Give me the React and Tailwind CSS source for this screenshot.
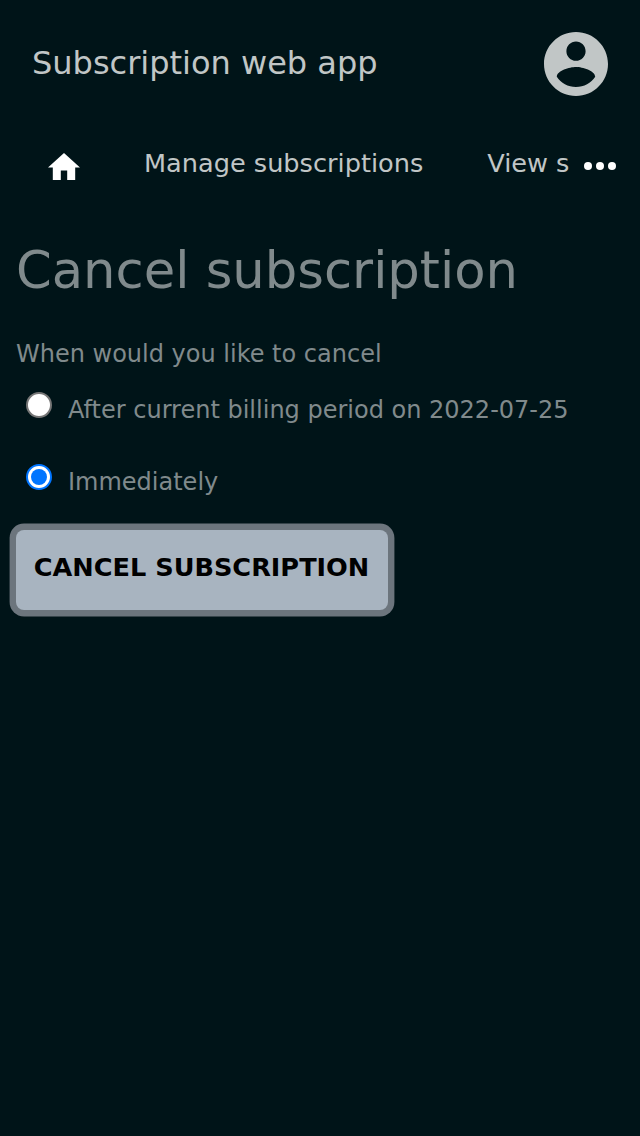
import React from "react";

function Header() {
  return (
    <header className="flex h-32 items-center justify-between px-8">
      <span className="pb-0.5 text-[32px] leading-none text-[#c1c6c6]">Subscription web app</span>
      <svg viewBox="2 2 20 20" className="size-16" fill="#c1c6c6" aria-label="Account">
        <path d="M12 2C6.48 2 2 6.48 2 12s4.48 10 10 10 10-4.48 10-10S17.52 2 12 2zm0 3c1.66 0 3 1.34 3 3s-1.34 3-3 3-3-1.34-3-3 1.34-3 3-3zm0 14.2c-2.5 0-4.71-1.28-6-3.22.03-1.99 4-3.08 6-3.08 1.99 0 5.97 1.09 6 3.08-1.29 1.94-3.5 3.22-6 3.22z" />
      </svg>
    </header>
  );
}

function Nav() {
  return (
    <nav className="flex h-[72px] items-center">
      <div className="flex w-[569px] items-center overflow-hidden pb-0.5 whitespace-nowrap text-[25.6px] leading-9 text-[#c1c6c6]">
        <svg viewBox="2 3 20 17" className="mt-[6.6px] ml-12 h-[27.2px] w-8 shrink-0" fill="#fff" aria-label="Home">
          <path d="M10 20v-6h4v6h5v-8h3L12 3 2 12h3v8z" />
        </svg>
        <span className="ml-16">Manage subscriptions</span>
        <span className="ml-16">View s</span>
      </div>
      <svg viewBox="0 0 32 8" className="mt-1 ml-[15px] h-2 w-8" fill="#fff" aria-label="More">
        <circle cx="4" cy="4" r="4" />
        <circle cx="16" cy="4" r="4" />
        <circle cx="28" cy="4" r="4" />
      </svg>
    </nav>
  );
}

function Option({ label, checked }) {
  return (
    <label className="flex h-[72px] items-start pl-[26px]">
      {checked ? (
        <span className="flex size-[26px] items-center justify-center rounded-full border-2 border-[#0075ff] bg-white">
          <span className="size-4 rounded-full bg-[#0075ff]" />
        </span>
      ) : (
        <span className="size-[26px] rounded-full border-2 border-[#767676] bg-white" />
      )}
      <span className="mt-[3px] ml-4 text-[24px] leading-[30px]">{label}</span>
    </label>
  );
}

export default function App() {
  return (
    <div className="min-h-[1136px] w-[640px] overflow-hidden bg-[#001418] font-['DejaVu_Sans',sans-serif] text-[#808a8c]">
      <Header />
      <Nav />
      <main>
        <h1 className="mt-[40px] ml-4 text-[51.2px] leading-[60px]">Cancel subscription</h1>
        <p className="mt-[38px] ml-4 text-[24px] leading-8">When would you like to cancel</p>
        <div className="mt-[22px]">
          <Option label="After current billing period on 2022-07-25" />
          <Option label="Immediately" checked />
        </div>
        <button className="-mt-[6px] ml-4 h-20 w-[372px] rounded-lg bg-[#a8b4c0] pr-px pb-1.5 text-[25.6px] font-bold text-black ring-[6.4px] ring-[#6c757d]">
          CANCEL SUBSCRIPTION
        </button>
      </main>
    </div>
  );
}
